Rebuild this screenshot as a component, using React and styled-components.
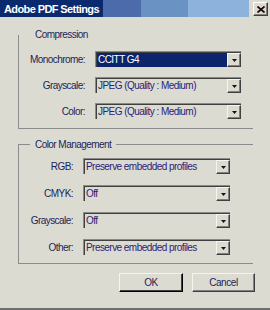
import React from "react";
import styled, { createGlobalStyle } from "styled-components";

const GlobalStyle = createGlobalStyle`
  html, body {
    margin: 0;
    padding: 0;
    background: #dcdbd2;
  }
  body {
    font-family: "Liberation Sans", Arial, sans-serif;
  }
`;

const Window = styled.div`
  width: 270px;
  height: 310px;
  box-sizing: border-box;
  display: flex;
  flex-direction: column;
  background: #dcdbd2;
  border-bottom: 2px solid #6e6e6e;
  overflow: hidden;
`;

const TitleRow = styled.div`
  display: flex;
  height: 17px;
`;

const TitleBar = styled.div`
  flex: 1;
  display: flex;
  align-items: center;
  padding-left: 4px;
  background: linear-gradient(
    to right,
    #0b2a6e 0 103px,
    #4b6bab 103px 141px,
    #6a93c4 141px 188px,
    #8db3dd 188px
  );
  color: #fff;
  font-size: 11px;
  font-weight: bold;
  letter-spacing: -0.6px;
  white-space: nowrap;
`;

const CloseSlot = styled.div`
  width: 21px;
  box-sizing: border-box;
  padding: 2px 0 0 4px;
`;

const CloseButton = styled.button`
  width: 15px;
  height: 14px;
  box-sizing: border-box;
  padding: 0;
  display: flex;
  align-items: center;
  justify-content: center;
  background: #dcdbd2;
  border-top: 1px solid #fff;
  border-left: 1px solid #fff;
  border-right: 1px solid #404040;
  border-bottom: 1px solid #404040;
  box-shadow: inset -1px -1px 0 #808080;
`;

const Group = styled.div`
  display: flex;
  flex-direction: column;
  margin: ${(p) => p.$mt}px 17px 0 18px;
  border-left: 1px solid #8c8c8c;
  border-bottom: 1px solid #8c8c8c;
  border-top: ${(p) => (p.$top ? "1px solid #8c8c8c" : "0")};
  padding-bottom: ${(p) => p.$pb}px;
`;

const Legend = styled.div`
  align-self: flex-start;
  margin: -6px 0 0 11px;
  padding: 0 5px;
  background: #dcdbd2;
  line-height: 12px;
  font-size: 10px;
  letter-spacing: -0.55px;
  color: #201f55;
`;

const Rows = styled.div`
  display: grid;
  grid-template-columns: ${(p) => p.$labelW}px ${(p) => p.$fieldW}px;
  column-gap: 10px;
  row-gap: ${(p) => p.$gap}px;
  margin-top: ${(p) => p.$mt}px;
  align-items: center;
`;

const Label = styled.div`
  text-align: right;
  font-size: 10px;
  letter-spacing: -0.55px;
  color: #201f55;
  white-space: nowrap;
`;

const Field = styled.div`
  display: flex;
  height: 16px;
  box-sizing: border-box;
  border-top: 1px solid #8a8a8a;
  border-left: 1px solid #8a8a8a;
  padding: 1px 0 0 1px;
  box-shadow: inset 1px 1px 0 #404040;
`;

const Value = styled.div`
  flex: 1;
  padding-left: 1px;
  line-height: 14px;
  font-size: 10px;
  letter-spacing: -0.55px;
  white-space: nowrap;
  overflow: hidden;
  background: ${(p) => (p.$selected ? "#0c246c" : "transparent")};
  color: ${(p) => (p.$selected ? "#fff" : "#2a2278")};
`;

const DropButton = styled.div`
  width: 14px;
  height: 14px;
  box-sizing: border-box;
  display: flex;
  align-items: center;
  justify-content: center;
  background: #dcdbd2;
  border-top: 1px solid #f4f4f0;
  border-left: 1px solid #f4f4f0;
  border-right: 1px solid #404040;
  border-bottom: 1px solid #404040;
  box-shadow: inset -1px -1px 0 #808080;
`;

const ButtonRow = styled.div`
  display: flex;
  justify-content: flex-end;
  gap: 9px;
  margin-top: 9px;
  padding-right: 15px;
`;

const Button = styled.button`
  width: ${(p) => p.$w}px;
  height: 19px;
  box-sizing: border-box;
  padding: 0;
  background: #dcdbd2;
  font-family: "Liberation Sans", Arial, sans-serif;
  font-size: 10px;
  letter-spacing: -0.4px;
  color: #201f55;
  border-top: 1px solid #f4f4f0;
  border-left: 1px solid #f4f4f0;
  border-right: 1px solid ${(p) => (p.$default ? "#000" : "#404040")};
  border-bottom: 1px solid ${(p) => (p.$default ? "#000" : "#404040")};
  box-shadow: inset -1px -1px 0 ${(p) => (p.$default ? "#404040" : "#808080")};
`;

const Arrow = () => (
  <svg width="5" height="3" viewBox="0 0 5 3">
    <polygon points="0,0 5,0 2.5,3" fill="#2b0a0a" />
  </svg>
);

const Select = ({ value, selected }) => (
  <Field>
    <Value $selected={selected}>{value}</Value>
    <DropButton>
      <Arrow />
    </DropButton>
  </Field>
);

const compression = [
  { label: "Monochrome:", value: "CCITT G4", selected: true },
  { label: "Grayscale:", value: "JPEG (Quality : Medium)" },
  { label: "Color:", value: "JPEG (Quality : Medium)" },
];

const colorManagement = [
  { label: "RGB:", value: "Preserve embedded profiles" },
  { label: "CMYK:", value: "Off" },
  { label: "Grayscale:", value: "Off" },
  { label: "Other:", value: "Preserve embedded profiles" },
];

export default function App() {
  return (
    <Window>
      <GlobalStyle />
      <TitleRow>
        <TitleBar>Adobe PDF Settings</TitleBar>
        <CloseSlot>
          <CloseButton>
            <svg width="8" height="7" viewBox="0 0 8 7">
              <path d="M0.5 0.5 L7.5 6.5 M7.5 0.5 L0.5 6.5" stroke="#1a0505" strokeWidth="1.7" />
            </svg>
          </CloseButton>
        </CloseSlot>
      </TitleRow>

      <Group $mt={18} $pb={9}>
        <Legend>Compression</Legend>
        <Rows $labelW={66} $fieldW={146} $gap={10} $mt={10}>
          {compression.map((row) => (
            <React.Fragment key={row.label}>
              <Label>{row.label}</Label>
              <Select value={row.value} selected={row.selected} />
            </React.Fragment>
          ))}
        </Rows>
      </Group>

      <Group $mt={15} $pb={8} $top>
        <Legend>Color Management</Legend>
        <Rows $labelW={54} $fieldW={147} $gap={11} $mt={7}>
          {colorManagement.map((row) => (
            <React.Fragment key={row.label}>
              <Label>{row.label}</Label>
              <Select value={row.value} />
            </React.Fragment>
          ))}
        </Rows>
      </Group>

      <ButtonRow>
        <Button $w={64} $default>
          OK
        </Button>
        <Button $w={63}>Cancel</Button>
      </ButtonRow>
    </Window>
  );
}
